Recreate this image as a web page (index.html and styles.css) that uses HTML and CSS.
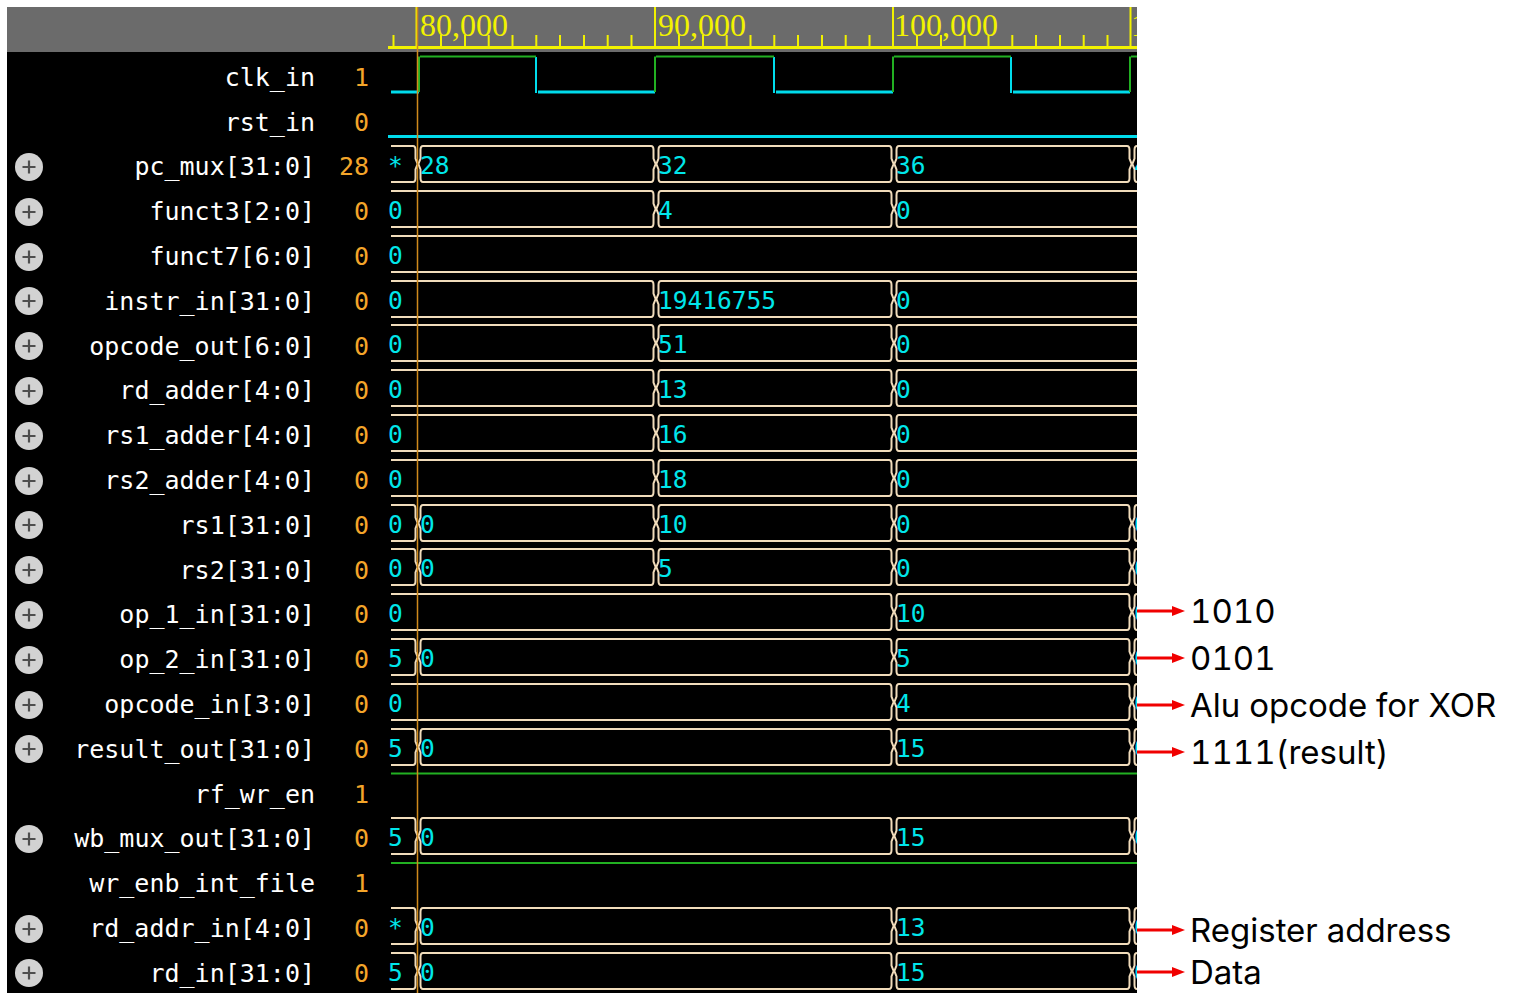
FILE: index.html
```html
<!DOCTYPE html>
<html>
<head>
<meta charset="utf-8">
<title>Waveform</title>
<link rel="stylesheet" href="styles.css">
</head>
<body>
<div class="page">
  <div class="window">
    <div class="hdr-left"></div>
    <svg class="ruler" width="749" height="45" viewBox="0 0 749 45">
      <rect class="bg" x="0" y="0" width="749" height="45"/>
      <path class="minor" d="M5.5 28V40M53 28V40M77 28V40M100.7 28V40M124.5 28V40M148.3 28V40M172 28V40M196 28V40M219.7 28V40M243.5 28V40M291 28V40M315 28V40M338.7 28V40M362.5 28V40M386.3 28V40M410 28V40M434 28V40M457.7 28V40M481.5 28V40M529 28V40M553 28V40M576.7 28V40M600.5 28V40M624.3 28V40M648 28V40M672 28V40M695.7 28V40M719.5 28V40"/>
      <path class="major" d="M28.5 0V40M267 0V40M505 0V40M742.5 0V40"/>
      <rect class="base" x="0" y="39" width="749" height="3"/>
      <text class="lbl" x="32" y="29">80,000</text>
      <text class="lbl" x="270" y="29">90,000</text>
      <text class="lbl" x="506" y="29">100,000</text>
      <text class="lbl" x="743" y="29">110,000</text>
      <path class="cursor" d="M29.5 0V45"/>
    </svg>

    <div class="names">
      <div class="row"><span class="ico"></span><span class="name">clk_in</span><span class="val">1</span></div>
      <div class="row"><span class="ico"></span><span class="name">rst_in</span><span class="val">0</span></div>
      <div class="row"><svg class="ico" viewBox="0 0 28 28"><circle class="pc" cx="14" cy="14" r="14"/><path class="pp" d="M7.5 14H20.5M14 7.5V20.5"/></svg><span class="name">pc_mux[31:0]</span><span class="val">28</span></div>
      <div class="row"><svg class="ico" viewBox="0 0 28 28"><circle class="pc" cx="14" cy="14" r="14"/><path class="pp" d="M7.5 14H20.5M14 7.5V20.5"/></svg><span class="name">funct3[2:0]</span><span class="val">0</span></div>
      <div class="row"><svg class="ico" viewBox="0 0 28 28"><circle class="pc" cx="14" cy="14" r="14"/><path class="pp" d="M7.5 14H20.5M14 7.5V20.5"/></svg><span class="name">funct7[6:0]</span><span class="val">0</span></div>
      <div class="row"><svg class="ico" viewBox="0 0 28 28"><circle class="pc" cx="14" cy="14" r="14"/><path class="pp" d="M7.5 14H20.5M14 7.5V20.5"/></svg><span class="name">instr_in[31:0]</span><span class="val">0</span></div>
      <div class="row"><svg class="ico" viewBox="0 0 28 28"><circle class="pc" cx="14" cy="14" r="14"/><path class="pp" d="M7.5 14H20.5M14 7.5V20.5"/></svg><span class="name">opcode_out[6:0]</span><span class="val">0</span></div>
      <div class="row"><svg class="ico" viewBox="0 0 28 28"><circle class="pc" cx="14" cy="14" r="14"/><path class="pp" d="M7.5 14H20.5M14 7.5V20.5"/></svg><span class="name">rd_adder[4:0]</span><span class="val">0</span></div>
      <div class="row"><svg class="ico" viewBox="0 0 28 28"><circle class="pc" cx="14" cy="14" r="14"/><path class="pp" d="M7.5 14H20.5M14 7.5V20.5"/></svg><span class="name">rs1_adder[4:0]</span><span class="val">0</span></div>
      <div class="row"><svg class="ico" viewBox="0 0 28 28"><circle class="pc" cx="14" cy="14" r="14"/><path class="pp" d="M7.5 14H20.5M14 7.5V20.5"/></svg><span class="name">rs2_adder[4:0]</span><span class="val">0</span></div>
      <div class="row"><svg class="ico" viewBox="0 0 28 28"><circle class="pc" cx="14" cy="14" r="14"/><path class="pp" d="M7.5 14H20.5M14 7.5V20.5"/></svg><span class="name">rs1[31:0]</span><span class="val">0</span></div>
      <div class="row"><svg class="ico" viewBox="0 0 28 28"><circle class="pc" cx="14" cy="14" r="14"/><path class="pp" d="M7.5 14H20.5M14 7.5V20.5"/></svg><span class="name">rs2[31:0]</span><span class="val">0</span></div>
      <div class="row"><svg class="ico" viewBox="0 0 28 28"><circle class="pc" cx="14" cy="14" r="14"/><path class="pp" d="M7.5 14H20.5M14 7.5V20.5"/></svg><span class="name">op_1_in[31:0]</span><span class="val">0</span></div>
      <div class="row"><svg class="ico" viewBox="0 0 28 28"><circle class="pc" cx="14" cy="14" r="14"/><path class="pp" d="M7.5 14H20.5M14 7.5V20.5"/></svg><span class="name">op_2_in[31:0]</span><span class="val">0</span></div>
      <div class="row"><svg class="ico" viewBox="0 0 28 28"><circle class="pc" cx="14" cy="14" r="14"/><path class="pp" d="M7.5 14H20.5M14 7.5V20.5"/></svg><span class="name">opcode_in[3:0]</span><span class="val">0</span></div>
      <div class="row"><svg class="ico" viewBox="0 0 28 28"><circle class="pc" cx="14" cy="14" r="14"/><path class="pp" d="M7.5 14H20.5M14 7.5V20.5"/></svg><span class="name">result_out[31:0]</span><span class="val">0</span></div>
      <div class="row"><span class="ico"></span><span class="name">rf_wr_en</span><span class="val">1</span></div>
      <div class="row"><svg class="ico" viewBox="0 0 28 28"><circle class="pc" cx="14" cy="14" r="14"/><path class="pp" d="M7.5 14H20.5M14 7.5V20.5"/></svg><span class="name">wb_mux_out[31:0]</span><span class="val">0</span></div>
      <div class="row"><span class="ico"></span><span class="name">wr_enb_int_file</span><span class="val">1</span></div>
      <div class="row"><svg class="ico" viewBox="0 0 28 28"><circle class="pc" cx="14" cy="14" r="14"/><path class="pp" d="M7.5 14H20.5M14 7.5V20.5"/></svg><span class="name">rd_addr_in[4:0]</span><span class="val">0</span></div>
      <div class="row"><svg class="ico" viewBox="0 0 28 28"><circle class="pc" cx="14" cy="14" r="14"/><path class="pp" d="M7.5 14H20.5M14 7.5V20.5"/></svg><span class="name">rd_in[31:0]</span><span class="val">0</span></div>
    </div>

    <svg class="waves" width="749" height="941" viewBox="0 0 749 941">
      <defs>
        <path id="tx" d="M-5 2C-3.5 2 -2.5 3.5 -2.5 6V14.5L-0.4 20L-2.5 25.5V34C-2.5 36.5 -3.5 38 -5 38M5 2C3.5 2 2.5 3.5 2.5 6V14.5L0.4 20L2.5 25.5V34C2.5 36.5 3.5 38 5 38"/>
      </defs>
      <rect class="wbg" x="0" y="0" width="749" height="941"/>

      <!-- clk_in -->
      <g transform="translate(0 3)">
        <path class="lo" d="M3 37H31M150 37H267M388 37H505M625 37H742"/>
        <path class="fall" d="M148 2V38M386 2V38M623 2V38"/>
        <path class="hi" d="M32 1.5H148M268 1.5H386M506 1.5H623M743 1.5H749"/>
        <path class="rise" d="M31 1.5V37M267 1.5V37M505 1.5V37M742 1.5V37"/>
      </g>
      <!-- rst_in -->
      <g transform="translate(0 47)"><path class="lo" d="M0 37.5H749"/></g>

      <!-- pc_mux -->
      <g class="bus" transform="translate(0 92)">
        <path d="M3 2H25M3 38H25M35 2H263M35 38H263M273 2H501M273 38H501M511 2H739M511 38H739"/>
        <use href="#tx" x="30"/><use href="#tx" x="268"/><use href="#tx" x="506"/><use href="#tx" x="744"/>
        <text class="wt" x="0" y="29.5">*</text><text class="wt" x="32" y="29.5">28</text><text class="wt" x="270" y="29.5">32</text><text class="wt" x="508" y="29.5">36</text><text class="wt" x="746" y="29.5">40</text>
      </g>
      <!-- funct3 -->
      <g class="bus" transform="translate(0 137)">
        <path d="M3 2H263M3 38H263M273 2H501M273 38H501M511 2H749M511 38H749"/>
        <use href="#tx" x="268"/><use href="#tx" x="506"/>
        <text class="wt" x="0" y="29.5">0</text><text class="wt" x="270" y="29.5">4</text><text class="wt" x="508" y="29.5">0</text>
      </g>
      <!-- funct7 -->
      <g class="bus" transform="translate(0 182)">
        <path d="M3 2H749M3 38H749"/>
        <text class="wt" x="0" y="29.5">0</text>
      </g>
      <!-- instr_in -->
      <g class="bus" transform="translate(0 227)">
        <path d="M3 2H263M3 38H263M273 2H501M273 38H501M511 2H749M511 38H749"/>
        <use href="#tx" x="268"/><use href="#tx" x="506"/>
        <text class="wt" x="0" y="29.5">0</text><text class="wt" x="270" y="29.5">19416755</text><text class="wt" x="508" y="29.5">0</text>
      </g>
      <!-- opcode_out -->
      <g class="bus" transform="translate(0 271)">
        <path d="M3 2H263M3 38H263M273 2H501M273 38H501M511 2H749M511 38H749"/>
        <use href="#tx" x="268"/><use href="#tx" x="506"/>
        <text class="wt" x="0" y="29.5">0</text><text class="wt" x="270" y="29.5">51</text><text class="wt" x="508" y="29.5">0</text>
      </g>
      <!-- rd_adder -->
      <g class="bus" transform="translate(0 316)">
        <path d="M3 2H263M3 38H263M273 2H501M273 38H501M511 2H749M511 38H749"/>
        <use href="#tx" x="268"/><use href="#tx" x="506"/>
        <text class="wt" x="0" y="29.5">0</text><text class="wt" x="270" y="29.5">13</text><text class="wt" x="508" y="29.5">0</text>
      </g>
      <!-- rs1_adder -->
      <g class="bus" transform="translate(0 361)">
        <path d="M3 2H263M3 38H263M273 2H501M273 38H501M511 2H749M511 38H749"/>
        <use href="#tx" x="268"/><use href="#tx" x="506"/>
        <text class="wt" x="0" y="29.5">0</text><text class="wt" x="270" y="29.5">16</text><text class="wt" x="508" y="29.5">0</text>
      </g>
      <!-- rs2_adder -->
      <g class="bus" transform="translate(0 406)">
        <path d="M3 2H263M3 38H263M273 2H501M273 38H501M511 2H749M511 38H749"/>
        <use href="#tx" x="268"/><use href="#tx" x="506"/>
        <text class="wt" x="0" y="29.5">0</text><text class="wt" x="270" y="29.5">18</text><text class="wt" x="508" y="29.5">0</text>
      </g>
      <!-- rs1 -->
      <g class="bus" transform="translate(0 451)">
        <path d="M3 2H25M3 38H25M35 2H263M35 38H263M273 2H501M273 38H501M511 2H739M511 38H739"/>
        <use href="#tx" x="30"/><use href="#tx" x="268"/><use href="#tx" x="506"/><use href="#tx" x="744"/>
        <text class="wt" x="0" y="29.5">0</text><text class="wt" x="32" y="29.5">0</text><text class="wt" x="270" y="29.5">10</text><text class="wt" x="508" y="29.5">0</text><text class="wt" x="746" y="29.5">0</text>
      </g>
      <!-- rs2 -->
      <g class="bus" transform="translate(0 495)">
        <path d="M3 2H25M3 38H25M35 2H263M35 38H263M273 2H501M273 38H501M511 2H739M511 38H739"/>
        <use href="#tx" x="30"/><use href="#tx" x="268"/><use href="#tx" x="506"/><use href="#tx" x="744"/>
        <text class="wt" x="0" y="29.5">0</text><text class="wt" x="32" y="29.5">0</text><text class="wt" x="270" y="29.5">5</text><text class="wt" x="508" y="29.5">0</text><text class="wt" x="746" y="29.5">0</text>
      </g>
      <!-- op_1_in -->
      <g class="bus" transform="translate(0 540)">
        <path d="M3 2H501M3 38H501M511 2H739M511 38H739"/>
        <use href="#tx" x="506"/><use href="#tx" x="744"/>
        <text class="wt" x="0" y="29.5">0</text><text class="wt" x="508" y="29.5">10</text><text class="wt" x="746" y="29.5">0</text>
      </g>
      <!-- op_2_in -->
      <g class="bus" transform="translate(0 585)">
        <path d="M3 2H25M3 38H25M35 2H501M35 38H501M511 2H739M511 38H739"/>
        <use href="#tx" x="30"/><use href="#tx" x="506"/><use href="#tx" x="744"/>
        <text class="wt" x="0" y="29.5">5</text><text class="wt" x="32" y="29.5">0</text><text class="wt" x="508" y="29.5">5</text><text class="wt" x="746" y="29.5">0</text>
      </g>
      <!-- opcode_in -->
      <g class="bus" transform="translate(0 630)">
        <path d="M3 2H501M3 38H501M511 2H739M511 38H739"/>
        <use href="#tx" x="506"/><use href="#tx" x="744"/>
        <text class="wt" x="0" y="29.5">0</text><text class="wt" x="508" y="29.5">4</text><text class="wt" x="746" y="29.5">0</text>
      </g>
      <!-- result_out -->
      <g class="bus" transform="translate(0 675)">
        <path d="M3 2H25M3 38H25M35 2H501M35 38H501M511 2H739M511 38H739"/>
        <use href="#tx" x="30"/><use href="#tx" x="506"/><use href="#tx" x="744"/>
        <text class="wt" x="0" y="29.5">5</text><text class="wt" x="32" y="29.5">0</text><text class="wt" x="508" y="29.5">15</text><text class="wt" x="746" y="29.5">0</text>
      </g>
      <!-- rf_wr_en -->
      <g transform="translate(0 719)"><path class="hi" d="M3 2.5H749"/></g>
      <!-- wb_mux_out -->
      <g class="bus" transform="translate(0 764)">
        <path d="M3 2H25M3 38H25M35 2H501M35 38H501M511 2H739M511 38H739"/>
        <use href="#tx" x="30"/><use href="#tx" x="506"/><use href="#tx" x="744"/>
        <text class="wt" x="0" y="29.5">5</text><text class="wt" x="32" y="29.5">0</text><text class="wt" x="508" y="29.5">15</text><text class="wt" x="746" y="29.5">0</text>
      </g>
      <!-- wr_enb_int_file -->
      <g transform="translate(0 809)"><path class="hi" d="M3 2H749"/></g>
      <!-- rd_addr_in -->
      <g class="bus" transform="translate(0 854)">
        <path d="M3 2H25M3 38H25M35 2H501M35 38H501M511 2H739M511 38H739"/>
        <use href="#tx" x="30"/><use href="#tx" x="506"/><use href="#tx" x="744"/>
        <text class="wt" x="0" y="29.5">*</text><text class="wt" x="32" y="29.5">0</text><text class="wt" x="508" y="29.5">13</text><text class="wt" x="746" y="29.5">0</text>
      </g>
      <!-- rd_in -->
      <g class="bus" transform="translate(0 899)">
        <path d="M3 2H25M3 38H25M35 2H501M35 38H501M511 2H739M511 38H739"/>
        <use href="#tx" x="30"/><use href="#tx" x="506"/><use href="#tx" x="744"/>
        <text class="wt" x="0" y="29.5">5</text><text class="wt" x="32" y="29.5">0</text><text class="wt" x="508" y="29.5">15</text><text class="wt" x="746" y="29.5">0</text>
      </g>

      <path class="cursor" d="M29.5 0V941"/>
    </svg>
  </div>

  <div class="notes">
    <div class="group group1">
      <div class="note"><svg class="arrow" width="48" height="12" viewBox="0 0 48 12"><path class="ash" d="M0 6H37"/><path class="ahd" d="M35 1L48 6L35 11Z"/></svg><span class="note-text">1010</span></div>
      <div class="note"><svg class="arrow" width="48" height="12" viewBox="0 0 48 12"><path class="ash" d="M0 6H37"/><path class="ahd" d="M35 1L48 6L35 11Z"/></svg><span class="note-text">0101</span></div>
      <div class="note"><svg class="arrow" width="48" height="12" viewBox="0 0 48 12"><path class="ash" d="M0 6H37"/><path class="ahd" d="M35 1L48 6L35 11Z"/></svg><span class="note-text">Alu opcode for XOR</span></div>
      <div class="note"><svg class="arrow" width="48" height="12" viewBox="0 0 48 12"><path class="ash" d="M0 6H37"/><path class="ahd" d="M35 1L48 6L35 11Z"/></svg><span class="note-text">1111(result)</span></div>
    </div>
    <div class="group group2">
      <div class="note"><svg class="arrow" width="48" height="12" viewBox="0 0 48 12"><path class="ash" d="M0 6H37"/><path class="ahd" d="M35 1L48 6L35 11Z"/></svg><span class="note-text">Register address</span></div>
      <div class="note"><svg class="arrow" width="48" height="12" viewBox="0 0 48 12"><path class="ash" d="M0 6H37"/><path class="ahd" d="M35 1L48 6L35 11Z"/></svg><span class="note-text">Data</span></div>
    </div>
  </div>
</div>
</body>
</html>
```

FILE: styles.css
```css
html, body {
  margin: 0;
  padding: 0;
  background: #ffffff;
}

.page {
  display: flex;
  align-items: flex-start;
  padding: 7px 0 0 7px;
  width: 1517px;
  height: 997px;
  box-sizing: border-box;
  overflow: hidden;
}

.window {
  flex: none;
  width: 1130px;
  height: 986px;
  background: #000000;
  display: grid;
  grid-template-columns: 381px 749px;
  grid-template-rows: 45px 941px;
  overflow: hidden;
}

.hdr-left {
  background: #6b6b6b;
}

.ruler,
.waves {
  display: block;
}

.ruler .bg {
  fill: #6b6b6b;
}

.ruler .minor,
.ruler .major {
  stroke: #f2f200;
  stroke-width: 2;
  fill: none;
}

.ruler .base {
  fill: #f2f200;
}

.ruler .lbl {
  font-family: "Liberation Serif", serif;
  font-size: 32px;
  fill: #f2f200;
}

.cursor {
  stroke: #d08a1c;
  stroke-width: 1.5;
  fill: none;
}

/* names column */
.names {
  padding-top: 3px;
  overflow: hidden;
  font-family: "DejaVu Sans Mono", monospace;
  font-size: 25px;
  color: #ffffff;
}

.row {
  height: 44.8px;
  display: flex;
  align-items: center;
  white-space: nowrap;
}

.ico {
  flex: none;
  width: 28px;
  height: 28px;
  margin-left: 8px;
  display: block;
}

.pc {
  fill: #d2d2d2;
}

.pp {
  stroke: #4e4e4e;
  stroke-width: 2.2;
  fill: none;
}

.name {
  flex: 1;
  text-align: right;
}

.val {
  flex: none;
  width: 54px;
  margin-right: 19px;
  text-align: right;
  color: #f4a52a;
}

/* waveform area */
.wbg {
  fill: #000000;
}

.bus {
  stroke: #f1dcbb;
  stroke-width: 2;
  fill: none;
}

.wt {
  font-family: "DejaVu Sans Mono", monospace;
  font-size: 24.5px;
  fill: #00e6ea;
  stroke: none;
}

.lo {
  stroke: #00dcec;
  stroke-width: 3;
  fill: none;
}

.fall {
  stroke: #00dcec;
  stroke-width: 2;
  fill: none;
}

.hi {
  stroke: #22b022;
  stroke-width: 2;
  fill: none;
}

.rise {
  stroke: #22b022;
  stroke-width: 2;
  fill: none;
}

/* annotations */
.notes {
  flex: none;
  display: flex;
  flex-direction: column;
  font-family: "Inter", "Noto Sans", sans-serif;
  font-size: 33px;
  font-feature-settings: "tnum" 1;
  color: #000000;
}

.group {
  display: flex;
  flex-direction: column;
}

.group1 {
  margin-top: 580px;
}

.group2 {
  margin-top: 134px;
}

.note {
  display: flex;
  align-items: center;
  height: 47px;
  white-space: nowrap;
}

.group2 .note {
  height: 42px;
}

.arrow {
  flex: none;
  display: block;
}

.ash {
  stroke: #f00000;
  stroke-width: 3;
  fill: none;
}

.ahd {
  fill: #f00000;
}

.note-text {
  margin-left: 5px;
}
```
